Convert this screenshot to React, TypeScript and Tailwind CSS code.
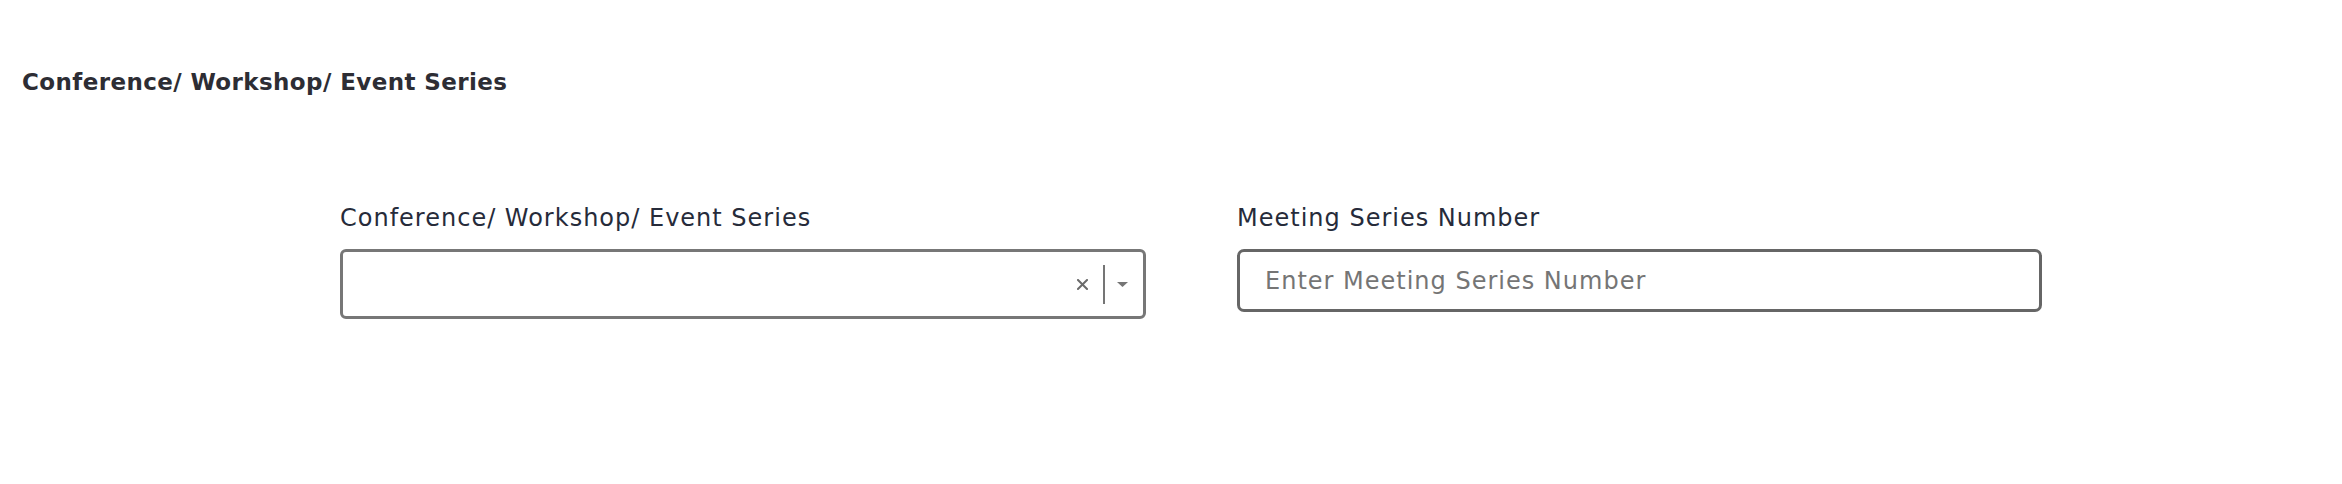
export default function App() {
  return (
    <div className="bg-white w-full min-h-[484px] font-['DejaVu_Sans',sans-serif]">
      <div className="pt-[68px] pl-[22px]">
        <h2 className="text-[23px] leading-[28px] font-bold text-[#2d2d34] tracking-[0.4px] whitespace-nowrap">
          Conference/ Workshop/ Event Series
        </h2>
      </div>
      <div className="flex pl-[340px] gap-[91px] mt-[106px]">
        <div className="w-[806px] flex flex-col">
          <label className="text-[24px] leading-[32px] text-[#262b3a] tracking-[1px] whitespace-nowrap">
            Conference/ Workshop/ Event Series
          </label>
          <div className="mt-[15px] h-[70px] border-[3px] border-[#777777] rounded-[6px] flex items-center justify-end pr-[15px]">
            <svg width="11" height="11" viewBox="0 0 11 11" className="mr-[15px]">
              <path d="M1 1 L10 10 M10 1 L1 10" stroke="#6b6b6b" strokeWidth="2" strokeLinecap="square" />
            </svg>
            <div className="w-[2px] h-[39px] bg-[#757575]" />
            <svg width="11" height="5" viewBox="0 0 11 5" className="ml-[12px]">
              <path d="M0 0 L11 0 L5.5 5 Z" fill="#757575" />
            </svg>
          </div>
        </div>
        <div className="w-[805px] flex flex-col">
          <label className="text-[24px] leading-[32px] text-[#262b3a] tracking-[1px] whitespace-nowrap">
            Meeting Series Number
          </label>
          <input
            type="text"
            placeholder="Enter Meeting Series Number"
            className="mt-[15px] h-[63px] border-[3px] border-[#666666] rounded-[7px] pl-[25px] text-[24px] tracking-[1px] text-[#262b3a] placeholder:text-[#757575] outline-none font-['DejaVu_Sans',sans-serif]"
          />
        </div>
      </div>
    </div>
  );
}
